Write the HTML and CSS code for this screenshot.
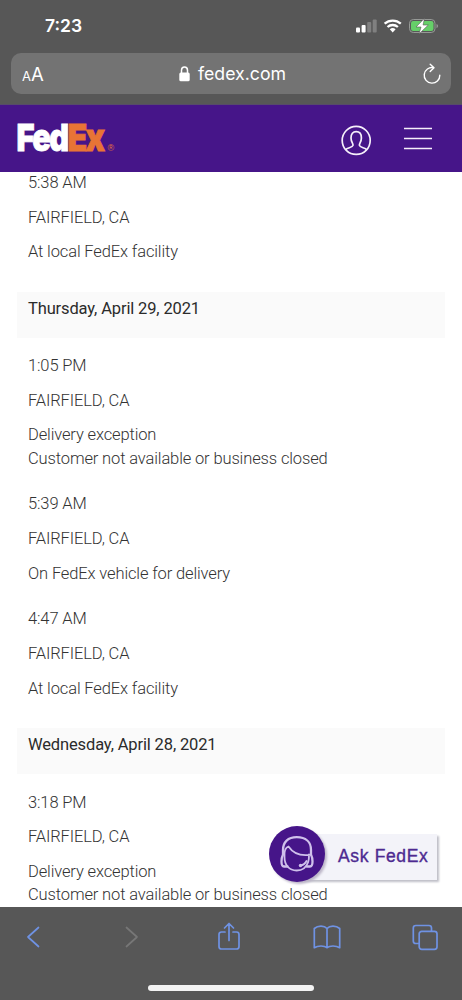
FILE: index.html
```html
<!DOCTYPE html>
<html lang="en">
<head>
<meta charset="utf-8">
<title>FedEx Tracking</title>
<link rel="stylesheet" href="styles.css">
</head>
<body>
<div class="phone">
  <div class="browser-top">
    <div class="status">
      <span class="clock">7:23</span>
      <svg class="status-icons" width="86" height="18" viewBox="0 0 86 18">
        <g fill="#fff"><rect x="1" y="10.500" width="4" height="5" rx="1"/><rect x="6.600" y="8" width="4" height="7.500" rx="1"/></g>
        <g fill="#808080"><rect x="12.200" y="5" width="4" height="10.500" rx="1"/><rect x="17.700" y="2.500" width="4" height="13" rx="1"/></g>
        <g fill="none" stroke="#fff" stroke-width="2.300"><path d="M29.600 6.700a12.200 12.200 0 0 1 16.200 0"/><path d="M32.500 10a7.800 7.800 0 0 1 10.400 0"/></g>
        <path d="M34.800 12.200a4.700 4.700 0 0 1 5.800 0L37.700 15.500z" fill="#fff"/>
        <rect x="54.500" y="2.500" width="25.500" height="13" rx="3.800" fill="none" stroke="#969996"/>
        <rect x="56" y="4" width="22.500" height="10" rx="2.300" fill="#66cf69"/>
        <path d="M81.500 7v4.200q1.600-.6 1.600-2.100T81.500 7z" fill="#969996"/>
        <path d="M69.500 1.300 61 10h5l-2 7L73.300 8h-5.200z" fill="#fff" stroke="#575757" stroke-width=".6"/>
      </svg>
    </div>
    <div class="address">
      <span class="text-size"><small>A</small>A</span>
      <span class="site">
        <svg width="11" height="16" viewBox="0 0 11 16"><rect x=".3" y="6.500" width="10.400" height="8.700" rx="1.500" fill="#fff"/><path d="M2.500 7V4.300a3 3.300 0 0 1 6 0V7" fill="none" stroke="#fff" stroke-width="1.500"/></svg>
        <span class="domain">fedex.com</span>
      </span>
      <svg class="reload" width="20" height="22" viewBox="0 0 20 22" fill="none" stroke="#fff" stroke-width="1.400" stroke-linecap="round" stroke-linejoin="round"><path d="M11.500 4.700A7.800 7.800 0 1 0 17.800 12.200M8.200 1.200l3.800 3.500-3.800 3.800"/></svg>
    </div>
  </div>
  <header class="site-header">
    <svg class="logo" width="102" height="50" viewBox="0 0 102 50">
      <text class="logo-text fed" x="-.6" y="37" textLength="51" lengthAdjust="spacingAndGlyphs">Fed</text>
      <text class="logo-text ex" x="50.500" y="37" textLength="36" lengthAdjust="spacingAndGlyphs">Ex</text>
      <text class="reg" x="90.500" y="37">®</text>
    </svg>
    <div class="header-actions">
      <svg width="32" height="32" viewBox="0 0 32 32" fill="none" stroke="#f5effa" stroke-width="1.700"><circle cx="16.200" cy="16.400" r="14"/><path d="M5.700 25.700c1.500-2.200 6.800-1.900 7.300-4.300.4-1.900-2-3.400-2-7.500 0-3.800 1.900-6.300 5.200-6.300s5.200 2.500 5.200 6.300c0 4.100-2.400 5.600-2 7.500.5 2.400 5.800 2.100 7.300 4.300"/></svg>
      <svg width="30" height="30" viewBox="0 0 30 30" stroke="#f5effa" stroke-width="1.700"><path d="M1 3.500h28M1 13.500h28M1 23.500h28"/></svg>
    </div>
  </header>
  <main class="history">
    <section class="day">
      <div class="event"><p>5:38 AM</p><p>FAIRFIELD, CA</p><p>At local FedEx facility</p></div>
    </section>
    <h2 class="date">Thursday, April 29, 2021</h2>
    <section class="day">
      <div class="event"><p>1:05 PM</p><p>FAIRFIELD, CA</p><p>Delivery exception<br>Customer not available or business closed</p></div>
      <div class="event"><p>5:39 AM</p><p>FAIRFIELD, CA</p><p>On FedEx vehicle for delivery</p></div>
      <div class="event"><p>4:47 AM</p><p>FAIRFIELD, CA</p><p>At local FedEx facility</p></div>
    </section>
    <h2 class="date">Wednesday, April 28, 2021</h2>
    <section class="day">
      <div class="event"><p>3:18 PM</p><p>FAIRFIELD, CA</p><p>Delivery exception<br>Customer not available or business closed</p></div>
    </section>
  </main>
  <nav class="toolbar">
    <div class="tools">
      <svg height="24" viewBox="0 0 14 24"><path d="M12.500 2.500 2 12l10.500 9.500"/></svg>
      <svg class="disabled" height="24" viewBox="0 0 14 24"><path d="M2.500 2.500 13 12 2.500 21.500"/></svg>
      <svg height="30" viewBox="0 0 24 30"><path d="M8 10H4.500Q2 10 2 12.500v12Q2 27 4.500 27h15q2.500 0 2.500-2.500v-12Q22 10 19.500 10H16M12 18.500V2M7.500 6 12 1.500 16.500 6"/></svg>
      <svg height="26" viewBox="0 0 28 26"><path d="M14 4.500Q12 2.200 8 2.200T1.300 4.500v19.200Q4 22 8 22t6 1.700Q16 22 20 22t6.700 1.700V4.500Q24 2.200 20 2.200T14 4.500v19.200"/></svg>
      <svg height="27" viewBox="0 0 26 27"><path d="M7 19.500H3.800Q1.300 19.500 1.300 17V4Q1.300 1.500 3.800 1.500H17q2.500 0 2.500 2.500v3"/><rect x="7.200" y="7.300" width="17.800" height="18" rx="2.500"/></svg>
    </div>
    <div class="home-bar"></div>
  </nav>
  <div class="chat">
    <svg class="agent" width="60" height="60" viewBox="0 0 60 60">
      <circle cx="28" cy="28" r="28" fill="#461589"/>
      <g fill="none" stroke="#cfc0eb" stroke-width="1.800" stroke-linecap="round" stroke-linejoin="round">
        <path d="M18.500 40.500H15q-2.500 0-2.500-5 0-4 1.500-7V24c0-8 5-12.800 13.800-12.800S42 16 42 24v4.500q1.500 3 1.500 7 0 5-2.500 5h-3.500" stroke-width="2.300"/>
        <path d="M15.500 26.500V31c0 8 4.500 13.500 12.200 13.500 5.800 0 9.800-3.500 11.500-8.500.7-2 .8-4.500.8-7.500M15.500 27c.3-3 1.700-5.700 4-6.500 3 4.500 9 10 21.500 8.300M31.500 39.500q4-.5 6-4.500"/>
      </g><circle cx="31.500" cy="39.500" r="1.700" fill="#cfc0eb"/>
    </svg>
    <span class="chat-label">Ask FedEx</span>
  </div>
</div>
</body>
</html>
```

FILE: styles.css
```css
* { box-sizing: border-box; }
body { margin: 0; background: #fff; font-family: Roboto, "Liberation Sans", sans-serif; }
.phone { position: relative; width: 462px; height: 1000px; overflow: hidden; display: flex; flex-direction: column; }
.browser-top { flex: none; height: 105px; padding: 15px 11px 0; background: #575757; color: #fff; font-family: Inter, sans-serif; border-bottom: 1px solid #574b6b; }
.status { display: flex; justify-content: space-between; height: 38px; padding: 2px 10px 0 34px; }
.clock { font-size: 17.500px; line-height: 18px; font-weight: 600; }
.address { height: 41px; border-radius: 10px; background: #737373; display: flex; align-items: center; justify-content: space-between; padding: 0 9px 0 11px; }
.text-size { width: 24px; padding-top: 2px; font-size: 18.500px; line-height: 20px; white-space: nowrap; }
.text-size small { font-size: 13px; }
.site { display: flex; align-items: center; gap: 8px; padding-top: 1px; margin-right: 3px; }
.domain { font-size: 17.700px; line-height: 22px; }
.site-header { flex: none; height: 67px; padding: 0 29px 0 17px; background: #461589; display: flex; align-items: center; justify-content: space-between; }
.logo-text { font: 900 37.500px Inter, sans-serif; letter-spacing: -2px; stroke-width: .8px; }
.fed { fill: #fff; stroke: #fff; }
.ex { fill: #e87435; stroke: #e87435; }
.reg { font: 9px "Liberation Sans", sans-serif; fill: #e87435; }
.header-actions { display: flex; align-items: center; gap: 31px; padding-top: 3px; }
.history { flex: 1; min-height: 0; overflow: hidden; padding: 0 17px; color: #333; }
.day { padding: 0 11px; display: flex; flex-direction: column; gap: 22.400px; }
.event { display: flex; flex-direction: column; gap: 11.200px; font-size: 16.500px; font-weight: 300; line-height: 23.400px; letter-spacing: -.13px; }
.day:first-child { margin-top: -1px; }
.event p { margin: 0; white-space: nowrap; }
.date { height: 46px; margin: 28.300px 0 16.200px; padding: 5px 11px 0; background: #fafafa; color: #2b2b2b; font-size: 16.500px; line-height: 23.300px; font-weight: 400; letter-spacing: -.14px; }
.toolbar { flex: none; height: 93px; background: #575757; display: flex; flex-direction: column; align-items: center; padding-top: 15px; }
.tools { flex: none; width: 100%; height: 30px; padding: 0 23px 0 19px; display: flex; align-items: center; justify-content: space-between; }
.tools svg { width: 28px; fill: none; stroke: #6f92e3; stroke-width: 1.700; stroke-linejoin: round; stroke-linecap: round; }
.tools .disabled { stroke: #777; }
.home-bar { margin-top: 33px; width: 166px; height: 6px; border-radius: 3px; background: #f3f3f3; }
.chat { position: absolute; left: 269px; top: 826px; width: 170px; height: 60px; display: flex; align-items: flex-start; }
.agent { position: relative; z-index: 1; flex: none; filter: drop-shadow(2px 2px 1px #bcb5c8); }
.chat-label { width: 138px; height: 46px; margin: 8px 0 0 -30px; padding-left: 39px; background: #f3f3f9; box-shadow: 2px 2px 2px #bfbfc8; color: #4d2a91; font-family: "Liberation Sans", sans-serif; font-size: 17.500px; -webkit-text-stroke: .35px #4d2a91; line-height: 44px; letter-spacing: .65px; white-space: nowrap; }
```
